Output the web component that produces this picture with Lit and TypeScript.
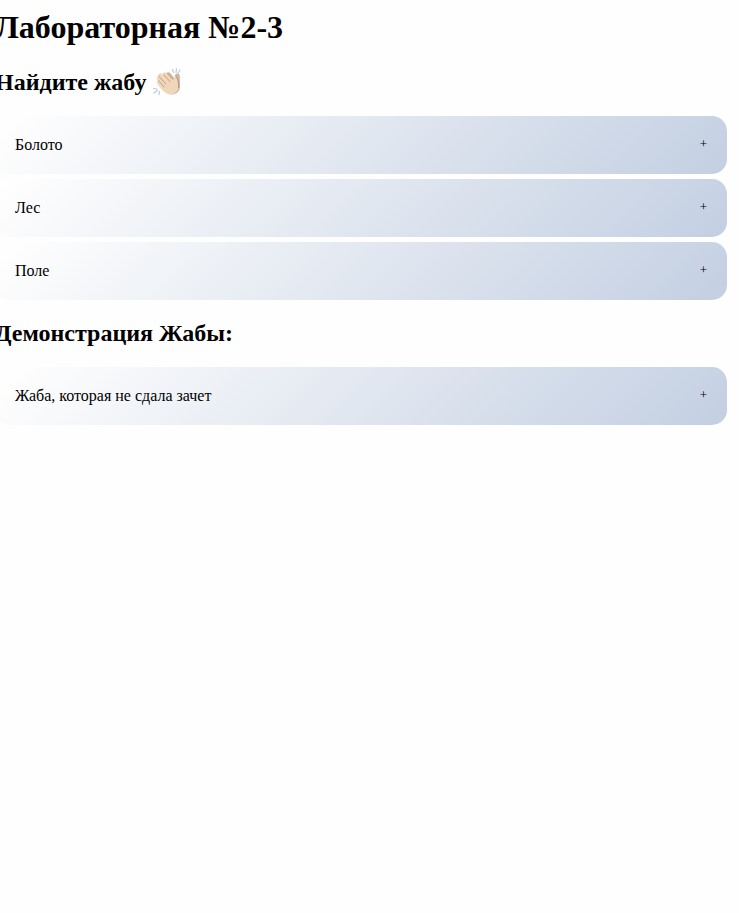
import { LitElement, html, css } from "lit";
import { customElement } from "lit/decorators.js";

@customElement("lab-accordion")
class LabAccordion extends LitElement {
  static properties = { label: { type: String } };
  static styles = css`
    :host { display: block; }
    .bar {
      box-sizing: border-box;
      width: 100%;
      height: 58px;
      display: flex;
      align-items: center;
      justify-content: space-between;
      padding: 0 20px;
      border: none;
      border-radius: 15px;
      background: linear-gradient(135deg, #ffffff 0%, #fefefe 3%, #c3cfe2 100%);
      font: 16px "Liberation Serif", serif;
      color: #000;
    }
    .sign { font-size: 13px; line-height: 15px; margin-bottom: 4px; }
  `;
  render() {
    return html`<button class="bar"><span>${(this as any).label}</span><span class="sign">+</span></button>`;
  }
}

@customElement("app-root")
class AppRoot extends LitElement {
  static styles = css`
    :host { display: block; height: 913px; overflow: hidden; background: #fefefe; font-family: "Liberation Serif", serif; color: #000; }
    .page { margin: 0 12px 0 -5px; padding-top: 9px; }
    h1 { margin: 0; font-size: 32px; line-height: 37px; }
    h2 { margin: 0; font-size: 24px; line-height: 27px; }
    .find { margin-top: 23px; display: flex; gap: 5px; height: 27px; }
    .clap { width: 32px; height: 32px; margin-top: -3px; flex: none; }
    .demo { margin-top: 20px; }
    .list { display: grid; gap: 5px; margin-top: 20px; }
  `;
  render() {
    return html`<main class="page">
      <h1>Лабораторная №2-3</h1>
      <h2 class="find">
        <span>Найдите жабу</span>
        <svg class="clap" viewBox="0 0 32 32" fill="none" stroke-linecap="round" stroke-linejoin="round">
          <path d="M15 8.5C15.5 6 18 5.5 19.5 7.5L24 13V9.5C24 7 28.5 6.500 28.800 9.500L29 20C29 26 25 28.500 20 28.500Z" fill="#cfb79c"/>
          <path d="M7.500 8.500C9 6.500 10.500 7.500 11.500 8.500C12 6 14.500 5.700 16 7.500L22.500 14.500C22 11.500 23.500 9.500 25.500 11C27.500 14 28 18 27.500 21.500C26.500 27 20.500 30 15.500 27.500C12 25.500 9 21.500 6.500 18C5.500 16.500 6 15.500 7 15C5 12.500 5.500 11.500 7 11C6 10 6.500 9 7.500 8.500Z" fill="#f1d7b9"/>
          <path d="M8 10.500L15 18M7.500 14.500L13 21M13 9L19 15.500M16.500 7.500L21.500 13" stroke="#b9a088" stroke-width="1"/>
          <path d="M25.500 11C27.500 14 28 18 27.500 21.500" stroke="#a99583" stroke-width="1"/>
          <path d="M21.500 3.500L22.500 6.500M25.500 2.500L25 6.500M29 4L27 7M2.500 22.500L6 23M3 27L6.500 24.500M8 28.500L8.500 25.500" stroke="#bdc9de" stroke-width="1.200"/>
        </svg>
      </h2>
      <div class="list">
        ${["Болото", "Лес", "Поле"].map((n) => html`<lab-accordion label=${n}></lab-accordion>`)}
      </div>
      <h2 class="demo">Демонстрация Жабы:</h2>
      <div class="list"><lab-accordion label="Жаба, которая не сдала зачет"></lab-accordion></div>
    </main>`;
  }
}
